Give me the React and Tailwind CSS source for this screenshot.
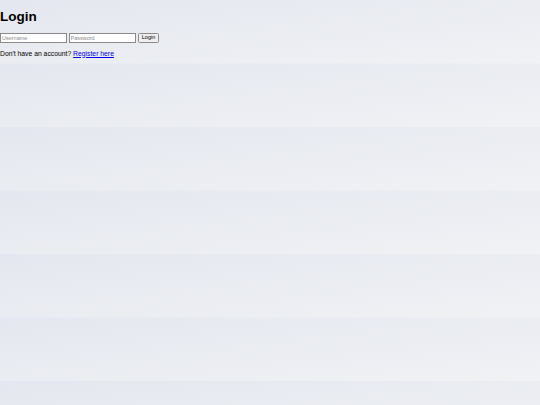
export default function App() {
  return (
    <div className="min-h-[405px] w-full bg-[linear-gradient(to_bottom_right,#e4e7ef_0%,#f0f2f5_100%)] bg-size-[100%_63.5px] bg-repeat font-['Liberation_Sans',Arial,sans-serif] text-black">
      <h2 className="pt-[9px] text-[13.5px] leading-[16px] font-bold">Login</h2>
      <form className="mt-[8px] flex items-center" onSubmit={(e) => e.preventDefault()}>
        <input
          type="text"
          placeholder="Username"
          className="w-[67px] h-[10px] border border-[#8a8a8a] bg-white px-[1px] text-[5.5px] leading-none placeholder:text-[#8a8a8a] outline-none"
        />
        <input
          type="password"
          placeholder="Password"
          className="ml-[1.5px] w-[67px] h-[10px] border border-[#8a8a8a] bg-white px-[1px] text-[5.5px] leading-none placeholder:text-[#8a8a8a] outline-none"
        />
        <button
          type="submit"
          className="ml-[2.5px] w-[21px] h-[10px] border border-[#8a8a8a] rounded-[1.5px] bg-[#efefef] text-[5.5px] leading-none text-black"
        >
          Login
        </button>
      </form>
      <p className="mt-[5.5px] text-[6.8px] leading-[9px]">
        Don't have an account?{' '}
        <a href="#" className="text-[#0000ee] underline">Register here</a>
      </p>
    </div>
  );
}
